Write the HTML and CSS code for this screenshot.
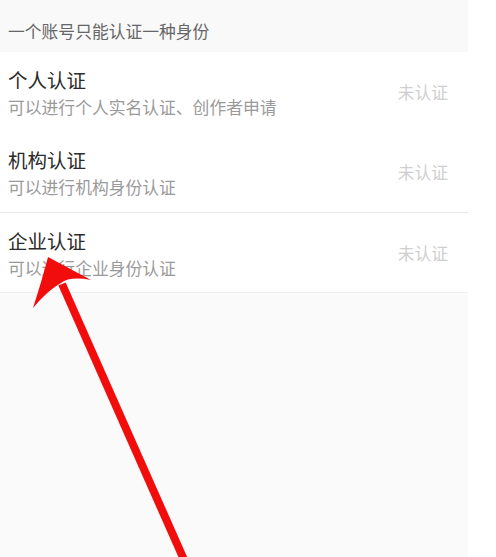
FILE: index.html
```html
<!DOCTYPE html>
<html lang="zh-CN">
<head>
<meta charset="utf-8">
<title>认证</title>
<link rel="stylesheet" href="styles.css">
</head>
<body>
<div class="page">
  <div class="notice">一个账号只能认证一种身份</div>
  <ul class="list">
    <li class="row">
      <div class="info">
        <div class="title">个人认证</div>
        <div class="desc">可以进行个人实名认证、创作者申请</div>
      </div>
      <div class="status">未认证</div>
    </li>
    <li class="row">
      <div class="info">
        <div class="title">机构认证</div>
        <div class="desc">可以进行机构身份认证</div>
      </div>
      <div class="status">未认证</div>
    </li>
    <li class="row row-last">
      <div class="info">
        <div class="title">企业认证</div>
        <div class="desc">可以进行企业身份认证</div>
      </div>
      <div class="status">未认证</div>
    </li>
  </ul>
  <div class="rest"></div>
</div>
<svg class="arrow" width="496" height="557" viewBox="0 0 496 557" xmlns="http://www.w3.org/2000/svg">
  <line x1="185" y1="562" x2="62" y2="284" stroke="#f20d0d" stroke-width="8"/>
  <path d="M48 257 L91 280 Q70 276 61 283 Q48 290 33 308 Q42 280 48 257 Z" fill="#f20d0d"/>
</svg>
</body>
</html>
```

FILE: styles.css
```css
html, body {
  margin: 0;
  padding: 0;
  background: #ffffff;
}
body {
  width: 496px;
  height: 557px;
  overflow: hidden;
  position: relative;
  font-family: "Noto Sans CJK SC", "Noto Sans", sans-serif;
}
.page {
  width: 468px;
  height: 557px;
  display: flex;
  flex-direction: column;
  background: #fafafa;
}
.notice {
  height: 52px;
  box-sizing: border-box;
  padding: 16px 0 0 8px;
  font-size: 16.8px;
  line-height: 30px;
  color: #666666;
  background: #f9f9f9;
}
.list {
  list-style: none;
  margin: 0;
  padding: 0;
  background: #ffffff;
  border-bottom: 1px solid #f0f0f0;
}
.row {
  height: 80px;
  box-sizing: border-box;
  display: flex;
  align-items: center;
  justify-content: space-between;
  padding: 0 20px 0 8px;
}
.row + .row-last {
  border-top: 1px solid #e8e8e8;
}
.info {
  display: flex;
  flex-direction: column;
  padding-top: 3px;
}
.title {
  font-size: 19.5px;
  line-height: 27px;
  color: #2b2b2b;
}
.desc {
  font-size: 16.8px;
  line-height: 28px;
  color: #9a9a9a;
}
.status {
  font-size: 16.8px;
  line-height: 24px;
  color: #cfcfcf;
}
.rest {
  flex: 1;
}
.arrow {
  position: absolute;
  left: 0;
  top: 0;
}
```
